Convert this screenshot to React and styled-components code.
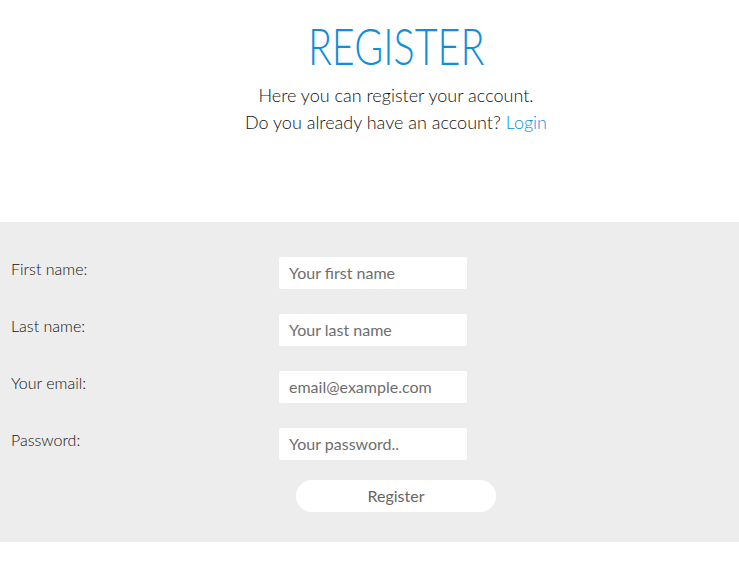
import styled, { createGlobalStyle } from "styled-components";

const GlobalStyle = createGlobalStyle`
  body {
    margin: 0;
    background: #fff;
    font-family: Lato, "Open Sans", sans-serif;
    color: #222;
  }
  * { box-sizing: border-box; }
`;

const Header = styled.header`
  display: flex;
  flex-direction: column;
  align-items: center;
  padding: 17px 0 0 53px;
  height: 222px;
`;

const Title = styled.h1`
  margin: 0;
  font-family: Lato, sans-serif;
  font-weight: 300;
  font-size: 52px;
  line-height: 56px;
  color: #0f8edb;
  transform: scaleX(0.76);
`;

const Intro = styled.p`
  margin: 9px 0 0;
  text-align: center;
  font-weight: 300;
  font-size: 18px;
  line-height: 27px;
  color: #111;
`;

const Link = styled.a`
  color: #0f8edb;
  text-decoration: none;
`;

const Section = styled.section`
  background: #ededed;
  padding: 35px 0 30px;
`;

const Form = styled.form`
  display: flex;
  flex-direction: column;
  gap: 25px;
`;

const Row = styled.div`
  display: grid;
  grid-template-columns: 268px 188px;
  align-items: center;
  padding-left: 11px;
`;

const Label = styled.label`
  font-weight: 300;
  font-size: 16px;
  color: #111;
  margin-top: -10px;
`;

const Input = styled.input`
  height: 32px;
  width: 188px;
  border: none;
  border-radius: 2px;
  background: #fff;
  padding: 0 10px 2px;
  font-family: Lato, sans-serif;
  font-size: 16px;
  color: #333;
  outline: none;

  &::placeholder {
    color: #6e6e6e;
  }
`;

const ButtonRow = styled.div`
  display: flex;
  justify-content: center;
  padding-left: 53px;
  margin-top: -5px;
`;

const Button = styled.button`
  width: 200px;
  height: 32px;
  padding-bottom: 2px;
  border: none;
  border-radius: 16px;
  background: #fff;
  font-family: Lato, sans-serif;
  font-size: 16px;
  color: #666;
  cursor: pointer;
`;

const fields = [
  { id: "first", label: "First name:", placeholder: "Your first name", type: "text" },
  { id: "last", label: "Last name:", placeholder: "Your last name", type: "text" },
  { id: "email", label: "Your email:", placeholder: "email@example.com", type: "email" },
  { id: "password", label: "Password:", placeholder: "Your password..", type: "password" },
];

const App = () => {
  return (
    <>
      <GlobalStyle />
      <Header>
        <Title>REGISTER</Title>
        <Intro>
          Here you can register your account.
          <br />
          Do you already have an account? <Link href="#">Login</Link>
        </Intro>
      </Header>
      <Section>
        <Form onSubmit={(e) => e.preventDefault()}>
          {fields.map((f, i) => (
            <Row key={f.id}>
              <Label htmlFor={f.id}>{f.label}</Label>
              <Input id={f.id} type={f.type} placeholder={f.placeholder} autoFocus={i === 0} />
            </Row>
          ))}
          <ButtonRow>
            <Button type="submit">Register</Button>
          </ButtonRow>
        </Form>
      </Section>
    </>
  );
};

export default App;
